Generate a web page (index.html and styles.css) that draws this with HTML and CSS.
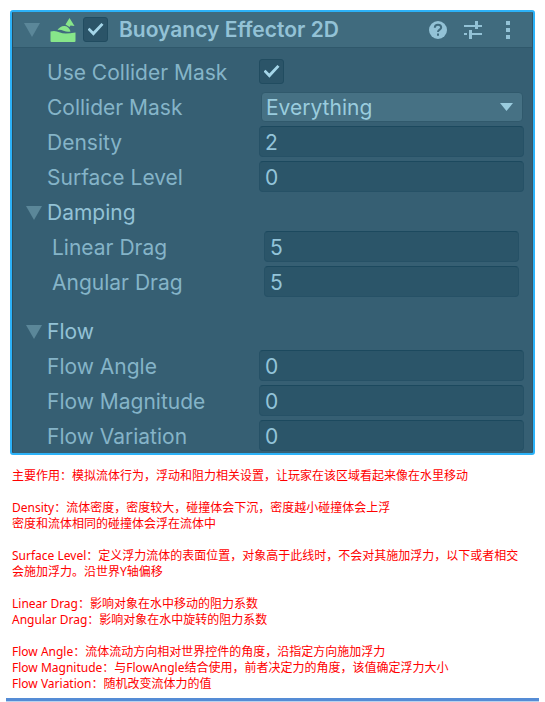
FILE: index.html
```html
<!DOCTYPE html>
<html lang="zh-CN">
<head>
<meta charset="utf-8">
<title>Buoyancy Effector 2D</title>
<link rel="stylesheet" href="styles.css">
</head>
<body>
<section class="inspector">
  <header class="head">
    <button class="fold" type="button" aria-label="Buoyancy Effector 2D"><svg width="16" height="14" viewBox="0 0 16 14"><path d="M0 0H16L8 14Z"/></svg></button>
    <svg class="logo" width="26" height="26" viewBox="0 0 26 26"><path d="M0.500 14.500Q5 13 10 15.500Q14 17.500 25.500 15.500V24Q25.500 25 24.500 25H1.500Q0.500 25 0.500 24ZM7.500 13C9 10.500 12 8.500 15 9Q19 9.500 20.500 14.500Q17 15.300 13.500 13.700Q10.500 12.500 7.500 13ZM19.500 1L24.500 9L20.500 8.500L19.500 10L15.500 7.500Z"/></svg>
    <input class="check" id="enabled" type="checkbox" checked>
    <label class="title" for="enabled">Buoyancy Effector 2D</label>
    <div class="tools">
      <button type="button" aria-label="Help"><svg width="20" height="20" viewBox="0 0 20 20"><circle cx="10" cy="10" r="9"/><path class="cut" d="M6.800 7.800C6.800 5.700 8 4.700 10 4.700S13.200 5.800 13.200 7.500C13.200 9.500 10 9.700 10 12"/><path class="cut" d="M10 13.500V15.700"/></svg></button>
      <button type="button" aria-label="Presets"><svg width="20" height="20" viewBox="0 0 20 20"><path d="M1 5H12V1H15V5H19V7H15V9H12V7H1ZM1 13H4V15H1ZM6 10H9V13H19V15H9V19H6Z"/></svg></button>
      <button type="button" aria-label="Menu"><svg width="20" height="20" viewBox="0 0 20 20"><path d="M8 1H12V5H8ZM8 8H12V12H8ZM8 15H12V19H8Z"/></svg></button>
    </div>
  </header>
  <div class="rows">
    <div class="row"><label for="mask">Use Collider Mask</label><input class="check" id="mask" type="checkbox" checked></div>
    <div class="row"><label for="layers">Collider Mask</label><div class="pick"><select id="layers"><option>Everything</option></select><svg width="13" height="8" viewBox="0 0 13 8"><path d="M0 0H13L6.500 8Z"/></svg></div></div>
    <div class="row"><label for="density">Density</label><input class="field" id="density" type="text" value="2"></div>
    <div class="row"><label for="surface">Surface Level</label><input class="field" id="surface" type="text" value="0"></div>
    <div class="row group"><button class="fold" type="button"><svg width="16" height="14" viewBox="0 0 16 14"><path d="M0 0H16L8 14Z"/></svg>Damping</button></div>
    <div class="nested">
      <div class="row"><label for="linear">Linear Drag</label><input class="field" id="linear" type="text" value="5"></div>
      <div class="row"><label for="angular">Angular Drag</label><input class="field" id="angular" type="text" value="5"></div>
    </div>
    <div class="row group"><button class="fold" type="button"><svg width="16" height="14" viewBox="0 0 16 14"><path d="M0 0H16L8 14Z"/></svg>Flow</button></div>
    <div class="row"><label for="angle">Flow Angle</label><input class="field" id="angle" type="text" value="0"></div>
    <div class="row"><label for="magnitude">Flow Magnitude</label><input class="field" id="magnitude" type="text" value="0"></div>
    <div class="row"><label for="variation">Flow Variation</label><input class="field" id="variation" type="text" value="0"></div>
  </div>
</section>
<section class="notes">
  <p>主要作用：模拟流体行为，浮动和阻力相关设置，让玩家在该区域看起来像在水里移动</p>
  <p>Density：流体密度，密度较大，碰撞体会下沉，密度越小碰撞体会上浮<br>密度和流体相同的碰撞体会浮在流体中</p>
  <p>Surface Level：定义浮力流体的表面位置，对象高于此线时，不会对其施加浮力，以下或者相交<br>会施加浮力。沿世界Y轴偏移</p>
  <p>Linear Drag：影响对象在水中移动的阻力系数<br>Angular Drag：影响对象在水中旋转的阻力系数</p>
  <p>Flow Angle：流体流动方向相对世界控件的角度，沿指定方向施加浮力<br>Flow Magnitude：与FlowAngle结合使用，前者决定力的角度，该值确定浮力大小<br>Flow Variation：随机改变流体力的值</p>
</section>
<hr class="rule">
</body>
</html>
```
FILE: styles.css
```css
* { box-sizing: border-box; }
body { margin: 0; background: #fff; }
button, input, select { font: inherit; color: inherit; margin: 0; }
button { padding: 0; border: 0; background: none; }
svg { display: block; flex: none; fill: currentColor; }

.inspector {
  margin: 10px 10px 0;
  border: 2px solid #2cb2f8;
  border-radius: 3px;
  background: #365f73;
  box-shadow: inset 1px 0 #2b4d5e, inset -1px 0 #2f566a;
  color: #85b4c8;
  font: 21px/33px Inter, "Liberation Sans", sans-serif;
}
.head {
  display: flex;
  align-items: center;
  height: 36px;
  margin: 0 1px;
  padding: 0 14px 0 11px;
  background: #406b7e;
  border-bottom: 1px solid #2f586b;
}
.fold svg { color: #5b8799; }
.logo { color: #87e68a; margin: 0 7px 0 10px; }
.title { margin-left: 11px; font-weight: 600; color: #93c2d6; }
.tools { display: flex; gap: 15px; margin-left: auto; color: #93c2d6; }
.cut { fill: none; stroke: #406b7e; stroke-width: 2px; }

.check {
  appearance: none;
  flex: none;
  width: 25px;
  height: 25px;
  border: 1px solid #214c60;
  border-radius: 3px;
  background: #2b5468;
  display: grid;
  place-items: center;
}
.check::before {
  content: "";
  width: 16px;
  height: 13px;
  background: #a4d5e8;
  clip-path: polygon(0 50%, 13% 36%, 36% 65%, 87% 0, 100% 14%, 37% 98%);
}

.rows { padding: 8px 9px 0 35px; }
.row {
  display: grid;
  grid-template-columns: 212px 1fr;
  align-items: start;
  height: 35px;
}
.rows > .row:last-child { height: 33px; }
.row .check { margin-top: 3px; }
.nested { padding: 0 5px 14px; }
.group { color: #93c2d6; }
.group .fold {
  display: flex;
  align-items: center;
  gap: 5px;
  margin-left: -21px;
}
.field {
  width: 100%;
  height: 31px;
  padding: 2px 5px 0;
  border: 1px solid;
  border-color: #1c495e #265166 #265166;
  border-radius: 4px;
  background: #2b5569;
  color: #93c4d9;
  line-height: 27px;
}
.pick {
  display: grid;
  align-items: center;
  margin: 1px 1px 0 2px;
}
.pick > * { grid-area: 1 / 1; }
.pick select {
  appearance: none;
  width: 100%;
  height: 30px;
  padding: 0 4px;
  border: 1px solid #30596c;
  border-radius: 4px;
  background: #467184;
  color: #9accde;
  line-height: 27px;
}
.pick svg { justify-self: end; margin-right: 10px; color: #9accde; pointer-events: none; }

.notes {
  padding: 13px 8px 0 12px;
  color: #f00;
  font: 12px/16px "Noto Sans", "Noto Sans CJK SC", sans-serif;
}
.notes p { margin: 0 0 16px; white-space: nowrap; }
.notes p:last-child { margin-bottom: 6px; }
.rule {
  height: 4px;
  margin: 0 6px;
  border: 0;
  background: linear-gradient(#558cd5 75%, #b9d3ee 75%);
}
```
